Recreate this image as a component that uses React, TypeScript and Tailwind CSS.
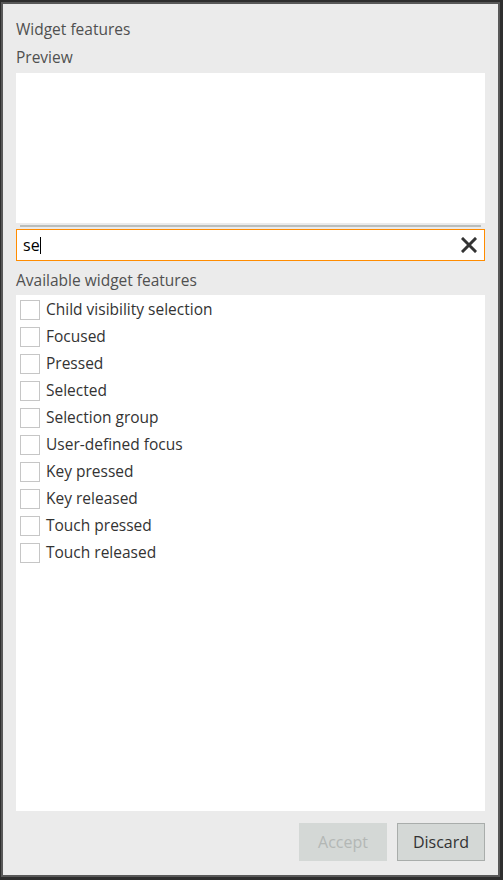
import React from 'react';

const features = [
  'Child visibility selection',
  'Focused',
  'Pressed',
  'Selected',
  'Selection group',
  'User-defined focus',
  'Key pressed',
  'Key released',
  'Touch pressed',
  'Touch released',
];

export default function App() {
  return (
    <div
      className="w-[503px] h-[880px] bg-[#2e2e2e] pt-[2px] pl-[1px] pr-[3px] pb-[3px]"
      style={{ fontFamily: '"Open Sans", "Noto Sans", sans-serif' }}
    >
      <div className="h-full border-2 border-[#585858] bg-[#ebebeb] flex flex-col px-[13px] pt-[15px] pb-[13px]">
        <div className="h-[20px] leading-[20px] text-[15.5px] text-[#505050]">Widget features</div>
        <div className="mt-[8px] h-[20px] leading-[20px] text-[15.5px] text-[#505050]">Preview</div>
        <div className="mt-[6px] h-[150px] bg-white" />
        <div className="mt-[2px] mx-[4px] h-[2px] bg-[#b9bdbb]" />

        {/* search box */}
        <div className="mt-[2px] h-[32px] bg-white border border-[#ff8c00] flex items-center pl-[6px] pr-[7px]">
          <span className="text-[16px] text-black leading-none">se</span>
          <span className="w-px h-[17px] bg-black" />
          <div className="flex-1" />
          <svg width="16" height="16" viewBox="0 0 16 16">
            <path d="M2 2L14 14M14 2L2 14" stroke="#333" strokeWidth="3" strokeLinecap="square" />
          </svg>
        </div>

        <div className="mt-[9px] h-[20px] leading-[20px] text-[15.5px] text-[#505050]">Available widget features</div>

        <div className="mt-[5px] h-[516px] bg-white pt-[1px]">
          {features.map(f => (
            <div key={f} className="h-[27px] flex items-center pl-[4px]">
              <div className="w-[20px] h-[20px] border border-[#c6c6c6] bg-white shrink-0" />
              <span className="ml-[6px] text-[15.5px] text-[#333]">{f}</span>
            </div>
          ))}
        </div>

        <div className="mt-[12px] flex justify-end gap-[10px]">
          <button className="w-[88px] h-[38px] bg-[#d4d8d6] text-[16px] text-[#b3b7b5]">Accept</button>
          <button className="w-[88px] h-[38px] bg-[#d4d8d6] border border-[#a9adab] text-[16px] text-[#333]">
            Discard
          </button>
        </div>
      </div>
    </div>
  );
}
